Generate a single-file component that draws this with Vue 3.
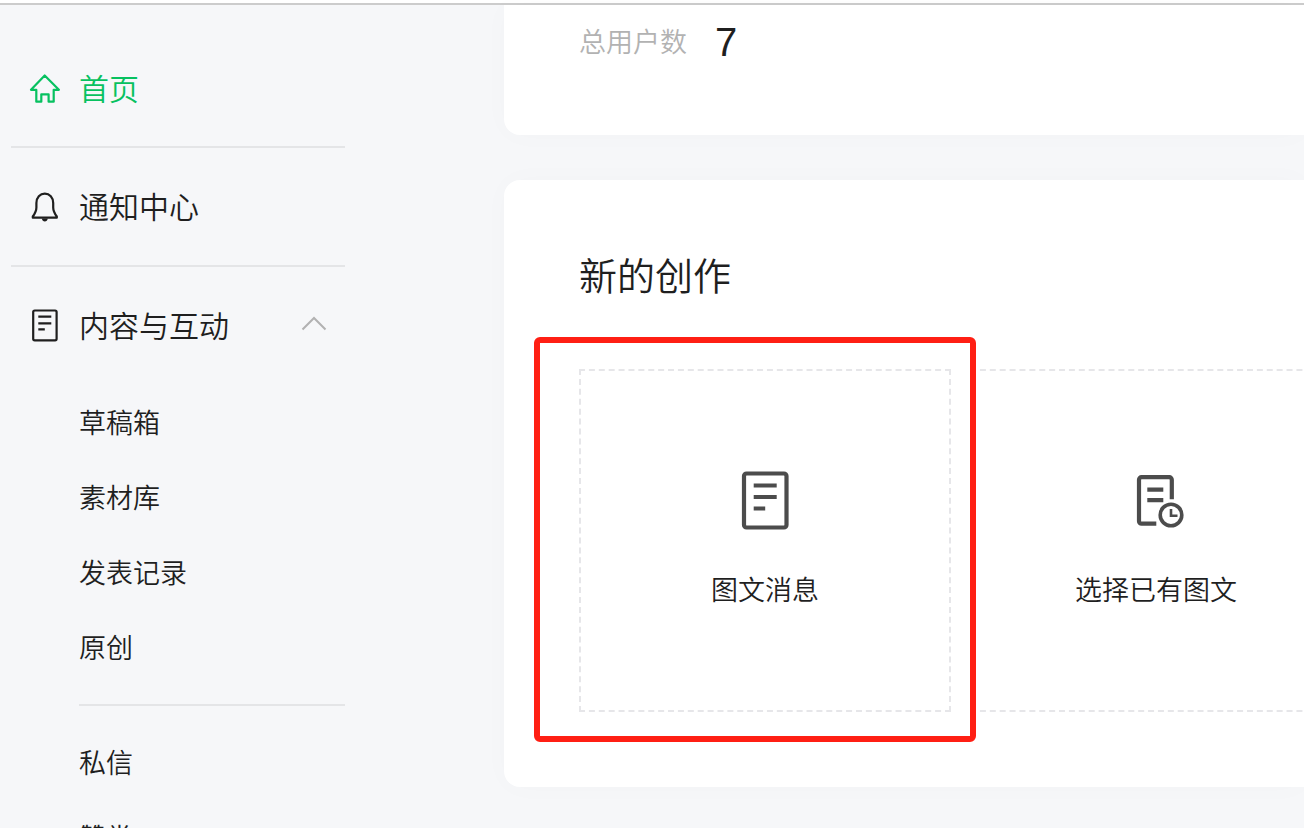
<script setup>
const drafts = ['草稿箱', '素材库', '发表记录', '原创']
const messages = ['私信', '赞赏']
</script>

<template>
  <div class="app">
    <header class="topbar"></header>
    <div class="body">
      <nav class="sidebar" aria-label="主导航">
        <a href="#" class="item active">
          <svg class="icon" viewBox="0 0 32 32" aria-hidden="true">
            <path d="M15.700 2.500L29.900 16.800H24.700V28.700H19.600V21.300H12.300V28.700H7.300V16.800H2Z" />
          </svg>
          <span>首页</span>
        </a>
        <a href="#" class="item">
          <svg class="icon" viewBox="0 0 32 32" aria-hidden="true">
            <path d="M3.800 26.700v-1.200C6 22.500 7.400 20 7.400 16.500V12C7.400 6.400 11 2.600 15.800 2.600S24.200 6.400 24.200 12v4.500c0 3.500 1.400 6 3.600 9v1.200z" />
            <path class="solid" d="M12.800 27.500h6c-.3 2-1.500 3-3 3s-2.700-1-3-3z" />
          </svg>
          <span>通知中心</span>
        </a>
        <button type="button" class="item" aria-expanded="true">
          <svg class="icon" viewBox="0 0 32 32" aria-hidden="true">
            <rect x="4.200" y="0.500" width="23.400" height="29.800" rx="1.500" />
            <path d="M9.300 6.700h13M9.300 13.400h13M9.300 19.400h6.500" />
          </svg>
          <span>内容与互动</span>
          <svg class="chevron" viewBox="0 0 26 20" aria-hidden="true">
            <path d="M1.500 13.500L13 2L24.500 13.500" />
          </svg>
        </button>
        <div class="submenu">
          <a v-for="label in drafts" :key="label" href="#" class="sub">{{ label }}</a>
          <hr class="divider" />
          <a v-for="label in messages" :key="label" href="#" class="sub">{{ label }}</a>
        </div>
      </nav>

      <main class="content">
        <section class="card summary">
          <span class="caption">总用户数</span>
          <span class="count">7</span>
        </section>

        <section class="card create">
          <h2 class="title">新的创作</h2>
          <div class="tiles">
            <button type="button" class="tile selected">
              <svg class="tile-icon" viewBox="0 0 64 64" aria-hidden="true">
                <rect x="11" y="5.500" width="42.500" height="54" rx="2.500" />
                <path d="M20.700 17.500h23M20.700 29h23M20.700 40.500h11.500" />
              </svg>
              <span>图文消息</span>
            </button>
            <button type="button" class="tile">
              <svg class="tile-icon" viewBox="0 0 64 64" aria-hidden="true">
                <path d="M32.300 55.700H17.500a2.500 2.500 0 0 1-2.500-2.500V11.700a2.500 2.500 0 0 1 2.500-2.500H45.300a2.500 2.500 0 0 1 2.500 2.500V31.300" />
                <path d="M23.300 21.700h16M23.300 32.200h16" />
                <circle class="thin" cx="47" cy="47" r="10.800" />
                <path class="hand" d="M47 41v6.800h6.500" />
              </svg>
              <span>选择已有图文</span>
            </button>
          </div>
        </section>
      </main>
    </div>
  </div>
</template>

<style>
body {
  margin: 0;
  background: #f6f7f9;
}
</style>

<style scoped>
.app {
  display: flex;
  flex-direction: column;
  height: 100vh;
  overflow: hidden;
  background: #f6f7f9;
  color: #1f1f1f;
  font-family: "Noto Sans", "Noto Sans CJK SC", sans-serif;
  font-weight: 350;
}

.topbar {
  flex: none;
  height: 3px;
  background: #fff;
  border-bottom: 2px solid #ccc;
}

.body {
  display: flex;
  flex: 1;
  min-height: 0;
}

.sidebar {
  flex: none;
  box-sizing: border-box;
  width: 345px;
  margin-right: 159px;
  padding: 24px 0 0 11px;
}

.item {
  display: flex;
  align-items: center;
  gap: 18px;
  box-sizing: border-box;
  width: 100%;
  height: 119px;
  padding: 0 18px;
  border: 0;
  border-bottom: 2px solid #e4e5e7;
  background: none;
  color: inherit;
  font: inherit;
  font-size: 30px;
  line-height: 40px;
  text-decoration: none;
}

button.item {
  height: 117px;
  border-bottom: 0;
}

.active {
  padding-top: 2px;
  color: #07c160;
}

.icon {
  width: 32px;
  height: 32px;
  fill: none;
  stroke: currentColor;
  stroke-width: 2.2;
  stroke-linejoin: round;
  overflow: visible;
}

.icon .solid {
  fill: currentColor;
  stroke: none;
}

.chevron {
  width: 26px;
  height: 20px;
  margin-left: auto;
  fill: none;
  stroke: #b2b2b2;
  stroke-width: 2;
}

.submenu {
  padding: 1px 0 0 68px;
}

.sub {
  display: block;
  color: inherit;
  font-size: 27px;
  line-height: 75px;
  text-decoration: none;
}

.divider {
  height: 2px;
  margin: 19px 0;
  border: 0;
  background: #e4e5e7;
}

.content {
  flex: 1;
  min-width: 0;
}

.card {
  overflow: hidden;
  padding-left: 75px;
  background: #fff;
  box-shadow: 0 0 30px rgba(0, 0, 0, 0.02);
}

.summary {
  display: flex;
  align-items: center;
  gap: 28px;
  padding-top: 12px;
  padding-bottom: 68px;
  border-radius: 0 0 0 16px;
}

.caption {
  color: #b2b2b2;
  font-size: 27px;
  line-height: 50px;
}

.count {
  font-family: "Liberation Sans", sans-serif;
  font-size: 40px;
  font-weight: 400;
  line-height: 50px;
}

.create {
  margin-top: 45px;
  padding-top: 70px;
  padding-bottom: 75px;
  border-radius: 16px 0 0 16px;
}

.title {
  margin: 0 0 69px;
  font-size: 38px;
  font-weight: inherit;
  line-height: 50px;
}

.tiles {
  display: flex;
  gap: 19px;
}

.tile {
  position: relative;
  display: flex;
  flex: none;
  flex-direction: column;
  align-items: center;
  gap: 40px;
  box-sizing: border-box;
  width: 372px;
  padding: 97px 0 102px;
  border: 2px dashed #e6e6e9;
  background: none;
  color: inherit;
  font: inherit;
  font-size: 27px;
  line-height: 36px;
}

.selected {
  z-index: 1;
}

.selected::after {
  content: "";
  position: absolute;
  inset: -34px -27px -32px -47px;
  border: 6px solid #ff1f14;
  border-radius: 6px;
}

.tile-icon {
  width: 64px;
  height: 64px;
  fill: none;
  stroke: #4c4c4c;
  stroke-width: 4.2;
}

.tile-icon .thin {
  stroke-width: 3.600;
}

.tile-icon .hand {
  stroke-width: 2.600;
}
</style>
